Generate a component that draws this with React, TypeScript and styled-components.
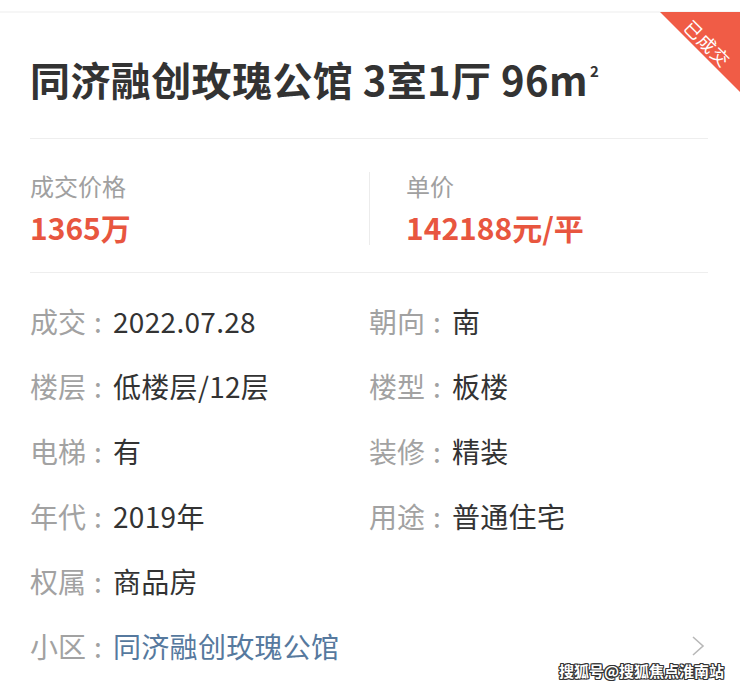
import React from "react";
import styled, { createGlobalStyle } from "styled-components";

const Global = createGlobalStyle`
  html, body { margin: 0; padding: 0; background: #ffffff; }
  body { font-family: "Noto Sans CJK SC", "Noto Sans", sans-serif; }
`;

const Page = styled.div`
  position: relative;
  width: 740px;
  height: 686px;
  overflow: hidden;
  background: #ffffff;
`;

const TopStrip = styled.div`
  height: 11px;
  border-bottom: 2px solid #f6f6f6;
`;

const Card = styled.div`
  padding: 0 32px 0 30px;
`;

const Title = styled.h1`
  margin: 0;
  padding: 42px 0 35px;
  font-size: 40px;
  line-height: 48px;
  font-weight: 700;
  color: #333333;
  white-space: nowrap;
  letter-spacing: 0.4px;
`;

const Sup = styled.sup`
  font-size: 15px;
  vertical-align: 19px;
  line-height: 0;
  margin-left: 2px;
`;

const Divider = styled.div`
  height: 1px;
  background: #eeeeee;
`;

const PriceRow = styled.div`
  display: flex;
  align-items: stretch;
  padding: 33px 0 27px;
`;

const PriceCol = styled.div<{ $first?: boolean }>`
  flex: ${(p) => (p.$first ? "0 0 339px" : "1")};
  padding-left: ${(p) => (p.$first ? "0" : "36px")};
  border-right: ${(p) => (p.$first ? "1px solid #ececec" : "none")};
  display: flex;
  flex-direction: column;
  gap: 9px;
`;

const PriceLabel = styled.div`
  font-size: 24px;
  line-height: 28px;
  color: #a0a0a0;
`;

const PriceValue = styled.div`
  font-size: 30px;
  line-height: 36px;
  font-weight: 700;
  color: #e8563f;
`;

const Grid = styled.div`
  display: grid;
  grid-template-columns: 339px 1fr;
  grid-auto-rows: 65px;
  padding-top: 15px;
`;

const Item = styled.div<{ $full?: boolean }>`
  display: flex;
  align-items: center;
  grid-column: ${(p) => (p.$full ? "1 / span 2" : "auto")};
  font-size: 28px;
  white-space: nowrap;
`;

const Label = styled.span`
  color: #a2a2a2;
`;

const Colon = styled.span`
  color: #a2a2a2;
  display: inline-block;
  width: 24px;
  text-align: center;
  margin-right: 3px;
`;

const Value = styled.span<{ $link?: boolean }>`
  color: ${(p) => (p.$link ? "#56799e" : "#333333")};
  flex: 1;
  letter-spacing: 0.3px;
`;

const Chevron = styled.svg`
  width: 14px;
  height: 22px;
  margin-right: 3px;
`;

const Badge = styled.div`
  position: absolute;
  top: 12px;
  right: 0;
  width: 80px;
  height: 80px;
  background: #f05c46;
  clip-path: polygon(0 0, 100% 0, 100% 100%);
`;

const BadgeText = styled.span`
  position: absolute;
  left: 48px;
  top: 31px;
  transform: translate(-50%, -50%) rotate(45deg);
  color: #ffffff;
  font-size: 18px;
  line-height: 20px;
  white-space: nowrap;
  letter-spacing: 1px;
`;

const Watermark = styled.div`
  position: absolute;
  right: 16px;
  bottom: 6px;
  font-size: 15px;
  line-height: 18px;
  font-weight: 700;
  color: #ffffff;
  white-space: nowrap;
  text-shadow: -1px -1px 0 #333, 1px -1px 0 #333, -1px 1px 0 #333, 1px 1px 0 #333,
    0 1px 0 #333, 0 -1px 0 #333, 1px 0 0 #333, -1px 0 0 #333;
`;

type Detail = { label: string; value: string; full?: boolean };

const details: Detail[] = [
  { label: "成交", value: "2022.07.28" },
  { label: "朝向", value: "南" },
  { label: "楼层", value: "低楼层/12层" },
  { label: "楼型", value: "板楼" },
  { label: "电梯", value: "有" },
  { label: "装修", value: "精装" },
  { label: "年代", value: "2019年" },
  { label: "用途", value: "普通住宅" },
  { label: "权属", value: "商品房", full: true },
];

export default function App() {
  return (
    <Page>
      <Global />
      <TopStrip />
      <Card>
        <Title>
          同济融创玫瑰公馆 3室1厅 96m<Sup>2</Sup>
        </Title>
        <Divider />
        <PriceRow>
          <PriceCol $first>
            <PriceLabel>成交价格</PriceLabel>
            <PriceValue>1365万</PriceValue>
          </PriceCol>
          <PriceCol>
            <PriceLabel>单价</PriceLabel>
            <PriceValue>142188元/平</PriceValue>
          </PriceCol>
        </PriceRow>
        <Divider />
        <Grid>
          {details.map((d) => (
            <Item key={d.label} $full={d.full}>
              <Label>{d.label}</Label>
              <Colon>:</Colon>
              <Value>{d.value}</Value>
            </Item>
          ))}
          <Item $full>
            <Label>小区</Label>
            <Colon>:</Colon>
            <Value $link>同济融创玫瑰公馆</Value>
            <Chevron viewBox="0 0 14 22">
              <polyline points="2,2 12,11 2,20" fill="none" stroke="#b8b8b8" strokeWidth="1.6" />
            </Chevron>
          </Item>
        </Grid>
      </Card>
      <Badge>
        <BadgeText>已成交</BadgeText>
      </Badge>
      <Watermark>搜狐号@搜狐焦点淮南站</Watermark>
    </Page>
  );
}
